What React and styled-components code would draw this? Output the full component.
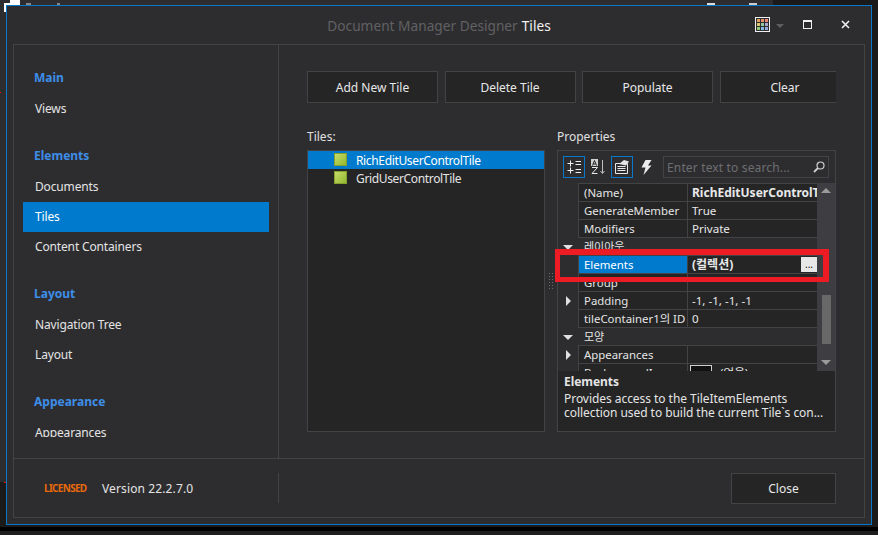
import styled, { createGlobalStyle } from "styled-components";

const FONT = `"Noto Sans", "Noto Sans CJK KR", sans-serif`;

const GlobalStyle = createGlobalStyle`
  html, body {
    margin: 0;
    padding: 0;
    background: #1a1a1a;
    overflow: hidden;
  }
  body {
    font-family: ${FONT};
    font-size: 12px;
    color: #e6e6e6;
  }
`;

const nav = [
  { title: "Main", items: ["Views"] },
  { title: "Elements", items: ["Documents", "Tiles", "Content Containers"] },
  { title: "Layout", items: ["Navigation Tree", "Layout"] },
  { title: "Appearance", items: ["Appearances"] },
];

const tiles = ["RichEditUserControlTile", "GridUserControlTile"];

const swatches = ["#e0a060", "#e89070", "#e88878", "#d8c878", "#90c8a0", "#a8a8c8", "#90c878", "#80b8e0", "#98a8d8"];

// bits of whatever sits behind the dialog
const marks = [
  { x: 0, y: 0, w: 773, h: 5, c: "#2d2d30" },
  { x: 0, y: 0, w: 6, h: 482, c: "#2d2d30" },
  { x: 4, y: 3, w: 6, h: 2, c: "#fff" },
  { x: 4, y: 4, w: 2, h: 8, c: "#fff" },
  { x: 10, y: 0, w: 10, h: 5, c: "#fff" },
  { x: 26, y: 3, w: 5, h: 2, c: "#888" },
  { x: 57, y: 3, w: 3, h: 2, c: "#888" },
  { x: 707, y: 3, w: 8, h: 2, c: "#ddd" },
  { x: 749, y: 3, w: 8, h: 2, c: "#ccc" },
  { x: 0, y: 92, w: 1, h: 1, c: "#e00" },
  { x: 4, y: 482, w: 2, h: 1, c: "#e00" },
];

const GridIcon = () => (
  <svg width="15" height="15" viewBox="0 0 15 15">
    <rect x="0.5" y="0.5" width="14" height="14" fill="#2d2d30" stroke="#f0f0f0" />
    {swatches.map((c, i) => (
      <rect key={c + i} x={2 + (i % 3) * 4} y={2 + Math.floor(i / 3) * 4} width="3" height="3" fill={c} />
    ))}
  </svg>
);

const CategorizedIcon = () => (
  <svg width="16" height="16" viewBox="0 0 16 16" fill="none" stroke="#f0f0f0">
    <path d="M1.5 4.5h6M4.5 1.5v6M1.5 11.5h6M4.5 8.5v6M9.5 2.5H15M9.5 5.5H15M9.5 10.5H15M9.5 13.5H15" />
  </svg>
);

const AlphaIcon = () => (
  <svg width="16" height="16" viewBox="0 0 16 16" fill="none">
    <rect x="1" y="0" width="7" height="7" fill="#d0d0d0" />
    <path d="M2.5 6.5l2-5 2 5M3.3 5h2.4" stroke="#252526" />
    <path d="M2 8.5h5.5l-5.5 6h5.5" stroke="#e8e8e8" />
    <path d="M12.5 1v13M10.5 12l2 2.5 2-2.5" stroke="#c0c0c0" />
  </svg>
);

const PagesIcon = () => (
  <svg width="16" height="16" viewBox="0 0 16 16" fill="none" stroke="#e8e8e8">
    <path d="M1.5 4.5h12v10h-12z" />
    <path d="M3.5 7.5h8M3.5 9.5h8M3.5 11.5h8" />
    <path d="M5 5l5-4 5 1.5-3 4z" fill="#e4e4e4" stroke="none" />
  </svg>
);

const BoltIcon = () => (
  <svg width="11" height="15" viewBox="0 0 11 15">
    <path d="M4.5 0h6L7 5.5h3.5L2.5 15l2-7.5H.5z" fill="#ececec" />
  </svg>
);

const SearchIcon = () => (
  <svg width="12" height="12" viewBox="0 0 12 12" fill="none" stroke="#d0d0d0" strokeWidth="1.2">
    <circle cx="7.5" cy="4.5" r="3.5" />
    <path d="M5 7l-4 4" strokeWidth="1.8" />
  </svg>
);

const Desktop = styled.div`
  position: relative;
  width: 878px;
  height: 535px;
  overflow: hidden;
  background: linear-gradient(#1a1a1a 0 527px, #000 527px 531px, #1e1e1e 531px);
`;

const BackdropMark = styled.div`
  position: absolute;
  left: ${({ $x }) => $x}px;
  top: ${({ $y }) => $y}px;
  width: ${({ $w }) => $w}px;
  height: ${({ $h }) => $h}px;
  background: ${({ $c }) => $c};
`;

const Window = styled.div`
  position: absolute;
  left: 6px;
  top: 5px;
  box-sizing: border-box;
  width: 866px;
  height: 520px;
  display: flex;
  flex-direction: column;
  padding: 0 6px 6px;
  background: #2d2d30;
  border: 1px solid #0a78c8;
`;

const TitleBar = styled.header`
  position: relative;
  height: 38px;
  flex: none;
  display: flex;
  align-items: center;
  justify-content: center;
  font-size: 13.7px;
  color: #616163;
`;

const TitleName = styled.span`
  margin-left: 4px;
  color: #f0f0f0;
`;

const WindowButtons = styled.div`
  position: absolute;
  right: 15px;
  top: 11px;
  display: flex;
  align-items: center;
`;

const Caret = styled.span`
  width: 0;
  height: 0;
  margin: 2px 19px 0 6px;
  border-left: 4px solid transparent;
  border-right: 4px solid transparent;
  border-top: 4px solid #5e5e5e;
`;

const MaximizeBox = styled.span`
  box-sizing: border-box;
  width: 9px;
  height: 9px;
  margin-right: 29px;
  border: 1px solid #f0f0f0;
  border-top-width: 2px;
`;

const Frame = styled.div`
  flex: 1;
  min-height: 0;
  display: flex;
  flex-direction: column;
  border: 1px solid #434346;
`;

const Body = styled.div`
  flex: 1;
  min-height: 0;
  display: flex;
`;

const Sidebar = styled.nav`
  box-sizing: border-box;
  width: 265px;
  flex: none;
  border-right: 1px solid #434346;
  padding: 23px 0 21px 9px;
`;

const SidebarClip = styled.div`
  height: 100%;
  overflow: hidden;
`;

const NavTitle = styled.div`
  height: 20px;
  line-height: 19px;
  padding-left: 11px;
  margin: ${({ $first }) => ($first ? "0" : "22px")} 0 6px;
  font-size: 12px;
  font-weight: 700;
  color: #3d8ee8;
`;

const NavItem = styled.div`
  width: 246px;
  height: 30px;
  line-height: 30px;
  padding-left: 12px;
  box-sizing: border-box;
  font-size: 12px;
  letter-spacing: -0.15px;
  color: ${({ $active }) => ($active ? "#fff" : "#e4e4e4")};
  background: ${({ $active }) => ($active ? "#007acc" : "transparent")};
`;

const Content = styled.main`
  flex: 1;
  min-width: 0;
  padding: 26px 28px 0 28px;
  display: flex;
  flex-direction: column;
`;

const ButtonRow = styled.div`
  display: flex;
  gap: 6.5px;
  height: 32px;
  overflow: hidden;
`;

const ActionButton = styled.button`
  box-sizing: border-box;
  width: ${({ $w }) => $w || 131}px;
  height: ${({ $h }) => $h || 32}px;
  flex: none;
  padding: 0;
  background: #252526;
  border: 1px solid #434346;
  font-family: ${FONT};
  font-size: 12px;
  color: #e8e8e8;
`;

const Columns = styled.div`
  display: flex;
  gap: 12px;
  margin-top: 26px;
`;

const Column = styled.section`
  width: ${({ $w }) => $w}px;
  flex: none;
`;

const FieldLabel = styled.div`
  height: 21px;
  line-height: 15px;
  font-size: 12px;
  color: #e0e0e0;
`;

const TileList = styled.div`
  box-sizing: border-box;
  height: 282px;
  background: #252526;
  border: 1px solid #434346;
`;

const TileRow = styled.div`
  height: 18px;
  display: flex;
  align-items: center;
  padding-left: 26px;
  box-sizing: border-box;
  font-size: 12px;
  letter-spacing: -0.35px;
  color: ${({ $selected }) => ($selected ? "#fff" : "#e4e4e4")};
  background: ${({ $selected }) => ($selected ? "#007acc" : "transparent")};
`;

const TileSwatch = styled.span`
  box-sizing: border-box;
  width: 13px;
  height: 13px;
  margin: -2px 9px 0 0;
  border: 1px solid #86a030;
  background: linear-gradient(135deg, #c6dc6a, #93b82f);
`;

const PropertyPanel = styled.div`
  box-sizing: border-box;
  height: 282px;
  display: flex;
  flex-direction: column;
  border: 1px solid #434346;
  background: #2d2d30;
`;

const Toolbar = styled.div`
  height: 32px;
  flex: none;
  display: flex;
  align-items: center;
  padding-left: 5px;
  gap: 2px;
`;

const ToolButton = styled.span`
  box-sizing: border-box;
  width: 22px;
  height: 22px;
  display: flex;
  align-items: center;
  justify-content: center;
  border: 1px solid ${({ $on }) => ($on ? "#0a78c8" : "transparent")};
`;

const SearchBox = styled.div`
  box-sizing: border-box;
  width: 166px;
  height: 22px;
  margin-left: 4px;
  display: flex;
  align-items: center;
  justify-content: space-between;
  padding: 0 3px;
  border: 1px solid #434346;
  font-size: 12px;
  letter-spacing: 0.15px;
  color: #6e6e70;
`;

const Grid = styled.div`
  height: 188px;
  flex: none;
  display: flex;
  overflow: hidden;
`;

const Rows = styled.div`
  flex: 1;
  min-width: 0;
`;

const CategoryRow = styled.div`
  height: 18px;
  display: flex;
  align-items: center;
`;

const CategoryName = styled.span`
  box-sizing: border-box;
  flex: 1;
  height: 18px;
  line-height: 18px;
  padding-left: 6px;
  border-bottom: 1px solid #434346;
  font-size: 11px;
  color: #e4e4e4;
`;

const Gutter = styled.span`
  width: 20px;
  flex: none;
  align-self: center;
  display: flex;
  justify-content: center;
`;

const ArrowDown = styled.span`
  border-left: 5px solid transparent;
  border-right: 5px solid transparent;
  border-top: 5px solid #e0e0e0;
`;

const ArrowRight = styled.span`
  border-top: 5px solid transparent;
  border-bottom: 5px solid transparent;
  border-left: 5px solid #e0e0e0;
`;

const PropRow = styled.div`
  box-sizing: border-box;
  height: ${({ $first }) => ($first ? 19 : 18)}px;
  display: flex;
  align-items: flex-end;
  font-size: 11.4px;
`;

const PropName = styled.span`
  box-sizing: border-box;
  width: 110px;
  height: 100%;
  line-height: 18px;
  flex: none;
  padding-left: 5px;
  white-space: nowrap;
  overflow: hidden;
  border-left: 1px solid #434346;
  border-right: 1px solid #434346;
  border-bottom: 1px solid #434346;
  border-top: ${({ $first }) => ($first ? "1px solid #434346" : "0")};
  color: ${({ $selected }) => ($selected ? "#fff" : "#e4e4e4")};
  background: ${({ $selected }) => ($selected ? "#007acc" : "#252526")};
`;

const PropValue = styled.span`
  position: relative;
  box-sizing: border-box;
  flex: 1;
  min-width: 0;
  height: 100%;
  line-height: 18px;
  padding-left: 4px;
  white-space: nowrap;
  overflow: hidden;
  border-bottom: 1px solid #434346;
  border-top: ${({ $first }) => ($first ? "1px solid #434346" : "0")};
  font-size: ${({ $bold }) => ($bold ? "12px" : "11.6px")};
  font-weight: ${({ $bold }) => ($bold ? 700 : 400)};
  background: #252526;
  color: #e8e8e8;
`;

const EllipsisButton = styled.span`
  position: absolute;
  right: 0;
  top: 1px;
  width: 16px;
  height: 15px;
  line-height: 14px;
  text-align: center;
  font-size: 10px;
  font-weight: 400;
  color: #111;
  background: #e8e8e8;
`;

const ColorChip = styled.span`
  display: inline-block;
  width: 20px;
  height: 12px;
  margin: 1px 8px 0 -2px;
  border: 1px solid #d0d0d0;
  background: #111;
  vertical-align: top;
`;

const ScrollTrack = styled.div`
  position: relative;
  width: 18px;
  flex: none;
  display: flex;
  flex-direction: column;
  align-items: center;
  justify-content: space-between;
  padding: 5px 0 6px;
  box-sizing: border-box;
  background: #3e3e42;
`;

const ScrollThumb = styled.span`
  position: absolute;
  left: 5px;
  top: 112px;
  width: 9px;
  height: 49px;
  background: #686868;
`;

const ScrollArrow = styled.span`
  border-left: 5px solid transparent;
  border-right: 5px solid transparent;
  ${({ $up }) => ($up ? "border-bottom: 5px solid #9a9a9a;" : "border-top: 5px solid #9a9a9a;")}
`;

const Description = styled.div`
  flex: 1;
  padding: 2px 6px;
  background: #252526;
  font-size: 12px;
  line-height: 14px;
  letter-spacing: -0.05px;
  color: #e4e4e4;
`;

const DescriptionTitle = styled.div`
  height: 19px;
  line-height: 18px;
  font-weight: 700;
`;

const Callout = styled.div`
  position: absolute;
  left: 555px;
  top: 249px;
  box-sizing: border-box;
  width: 274px;
  height: 33px;
  border-style: solid;
  border-color: #ed1c24;
  border-width: 6px 6px 5px 5px;
`;

const GripDots = styled.div`
  position: absolute;
  left: 548px;
  top: 272px;
  width: 6px;
  height: 18px;
  background-image: radial-gradient(#6a6a6a 0.7px, transparent 0.8px);
  background-size: 3px 3px;
`;

const Footer = styled.footer`
  height: 58px;
  flex: none;
  display: flex;
  align-items: center;
  border-top: 1px solid #434346;
`;

const FooterLeft = styled.div`
  box-sizing: border-box;
  width: 265px;
  height: 30px;
  display: flex;
  align-items: center;
  padding-left: 30px;
  border-right: 1px solid #434346;
`;

const License = styled.span`
  width: 58px;
  font-size: 10px;
  font-weight: 700;
  letter-spacing: -0.7px;
  color: #e8690c;
`;

const VersionText = styled.span`
  font-size: 12px;
  letter-spacing: 0.12px;
  color: #e4e4e4;
`;

const FooterRight = styled.div`
  flex: 1;
  display: flex;
  justify-content: flex-end;
  padding-right: 28px;
`;

export default function App() {
  return (
    <Desktop>
      <GlobalStyle />
      {marks.map((m) => (
        <BackdropMark key={`${m.x}-${m.y}`} $x={m.x} $y={m.y} $w={m.w} $h={m.h} $c={m.c} />
      ))}
      <Window>
        <TitleBar>
          Document Manager Designer <TitleName>Tiles</TitleName>
          <WindowButtons>
            <GridIcon />
            <Caret />
            <MaximizeBox />
            <svg width="9" height="9" viewBox="0 0 9 9" fill="none" stroke="#f0f0f0" strokeWidth="1.6">
              <path d="M1 1l7 7M8 1L1 8" />
            </svg>
          </WindowButtons>
        </TitleBar>
        <Frame>
          <Body>
            <Sidebar>
              <SidebarClip>
                {nav.map((group, i) => (
                  <div key={group.title}>
                    <NavTitle $first={i === 0}>{group.title}</NavTitle>
                    {group.items.map((item) => (
                      <NavItem key={item} $active={item === "Tiles"}>{item}</NavItem>
                    ))}
                  </div>
                ))}
              </SidebarClip>
            </Sidebar>
            <Content>
              <ButtonRow>
                <ActionButton>Add New Tile</ActionButton>
                <ActionButton>Delete Tile</ActionButton>
                <ActionButton>Populate</ActionButton>
                <ActionButton>Clear</ActionButton>
              </ButtonRow>
              <Columns>
                <Column $w={238}>
                  <FieldLabel>Tiles:</FieldLabel>
                  <TileList>
                    {tiles.map((t, i) => (
                      <TileRow key={t} $selected={i === 0}>
                        <TileSwatch />
                        {t}
                      </TileRow>
                    ))}
                  </TileList>
                </Column>
                <Column $w={279}>
                  <FieldLabel>Properties</FieldLabel>
                  <PropertyPanel>
                    <Toolbar>
                      <ToolButton $on><CategorizedIcon /></ToolButton>
                      <ToolButton><AlphaIcon /></ToolButton>
                      <ToolButton $on><PagesIcon /></ToolButton>
                      <ToolButton><BoltIcon /></ToolButton>
                      <SearchBox>
                        Enter text to search...
                        <SearchIcon />
                      </SearchBox>
                    </Toolbar>
                    <Grid>
                      <Rows>
                        <PropRow $first><Gutter /><PropName $first>(Name)</PropName><PropValue $first $bold>RichEditUserControlTile</PropValue></PropRow>
                        <PropRow><Gutter /><PropName>GenerateMember</PropName><PropValue>True</PropValue></PropRow>
                        <PropRow><Gutter /><PropName>Modifiers</PropName><PropValue>Private</PropValue></PropRow>
                        <CategoryRow><Gutter><ArrowDown /></Gutter><CategoryName>레이아웃</CategoryName></CategoryRow>
                        <PropRow><Gutter /><PropName $selected>Elements</PropName><PropValue $bold>(컬렉션)<EllipsisButton>...</EllipsisButton></PropValue></PropRow>
                        <PropRow><Gutter /><PropName>Group</PropName><PropValue /></PropRow>
                        <PropRow><Gutter><ArrowRight /></Gutter><PropName>Padding</PropName><PropValue>-1, -1, -1, -1</PropValue></PropRow>
                        <PropRow><Gutter /><PropName>tileContainer1의 ID</PropName><PropValue>0</PropValue></PropRow>
                        <CategoryRow><Gutter><ArrowDown /></Gutter><CategoryName>모양</CategoryName></CategoryRow>
                        <PropRow><Gutter><ArrowRight /></Gutter><PropName>Appearances</PropName><PropValue /></PropRow>
                        <PropRow><Gutter /><PropName>BackgroundImage</PropName><PropValue><ColorChip />(없음)</PropValue></PropRow>
                      </Rows>
                      <ScrollTrack>
                        <ScrollArrow $up />
                        <ScrollThumb />
                        <ScrollArrow />
                      </ScrollTrack>
                    </Grid>
                    <Description>
                      <DescriptionTitle>Elements</DescriptionTitle>
                      Provides access to the TileItemElements<br />
                      collection used to build the current Tile`s con...
                    </Description>
                  </PropertyPanel>
                </Column>
              </Columns>
            </Content>
          </Body>
          <Footer>
            <FooterLeft>
              <License>LICENSED</License>
              <VersionText>Version 22.2.7.0</VersionText>
            </FooterLeft>
            <FooterRight>
              <ActionButton $w={105} $h={31}>Close</ActionButton>
            </FooterRight>
          </Footer>
        </Frame>
      </Window>
      <Callout />
      <GripDots />
    </Desktop>
  );
}
